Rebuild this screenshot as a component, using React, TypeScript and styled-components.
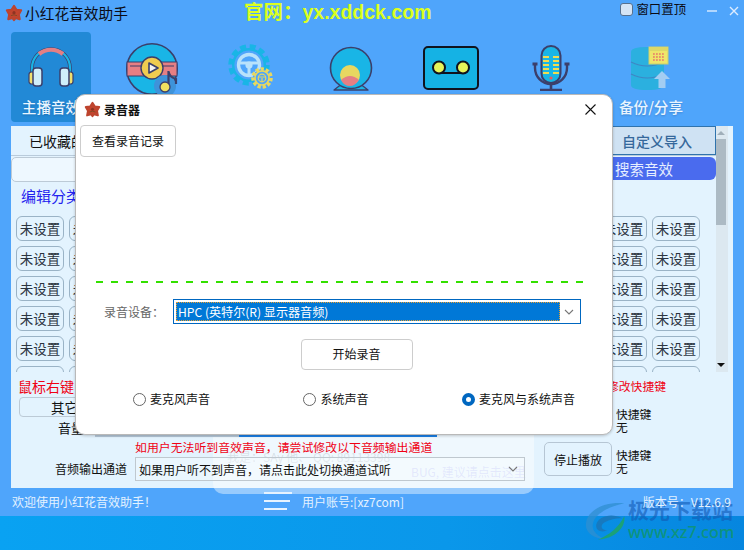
import React from "react";
import styled, { createGlobalStyle } from "styled-components";

const INK = "#3b3f6b";
const CYAN = "#19b5e6";
const SALMON = "#e57f84";
const YELLOW = "#e8d860";

const GlobalStyle = createGlobalStyle`
  html, body {
    margin: 0;
    padding: 0;
    overflow: hidden;
  }
  * {
    box-sizing: border-box;
  }
  body {
    font-family: "Noto Sans CJK SC", "Noto Sans", sans-serif;
  }
`;

const Flower = ({ size }: { size: number }) => (
  <svg width={size} height={size} viewBox="0 0 20 20">
    <path
      d="M10 2 L12.8 6.4 L18 7 L15.4 11.6 L16.4 17 L11.8 15.6 L10 18 L8.2 15.6 L3.6 17 L4.6 11.6 L2 7 L7.2 6.4 Z"
      fill="#c3452e"
      stroke="#bd442e"
      strokeWidth="2.2"
      strokeLinejoin="round"
    />
    <circle cx="10" cy="9.6" r="1.8" fill="#8f3322" />
    <path d="M6.5 13 Q10 11 13.5 13" stroke="#7d4a22" strokeWidth="1" fill="none" />
  </svg>
);

const HeadphonesIcon = () => (
  <svg width="48" height="42" viewBox="0 0 48 42">
    <path d="M5 28 V22 A19 19 0 0 1 43 22 V28" fill="none" stroke={INK} strokeWidth="3.6" />
    <path d="M5 28 V22 A19 19 0 0 1 43 22 V28" fill="none" stroke={CYAN} strokeWidth="2.2" />
    <path d="M12 8 A19 19 0 0 1 36 8" fill="none" stroke={SALMON} strokeWidth="4.2" />
    <rect x="2" y="26" width="6" height="12" rx="2.5" fill="#f0e070" stroke={INK} strokeWidth="1.2" />
    <rect x="6" y="22" width="9" height="18" rx="3" fill="#cfeefa" stroke={INK} strokeWidth="1.5" />
    <rect x="40" y="26" width="6" height="12" rx="2.5" fill="#f0e070" stroke={INK} strokeWidth="1.2" />
    <rect x="33" y="22" width="9" height="18" rx="3" fill="#cfeefa" stroke={INK} strokeWidth="1.5" />
  </svg>
);

const DiscIcon = () => (
  <svg width="56" height="54" viewBox="0 0 56 54">
    <circle cx="29" cy="27" r="25.2" fill={CYAN} stroke={INK} strokeWidth="1.6" />
    <rect x="4" y="20" width="50" height="14" fill={SALMON} stroke={INK} strokeWidth="1" />
    <path d="M7 24 H18 M40 24 H51" stroke={INK} strokeWidth="1" />
    <circle cx="29" cy="26" r="11" fill="#f0cc50" stroke={INK} strokeWidth="1.4" />
    <path d="M26 21 L35 26 L26 31 Z" fill="#f4f4f4" stroke={INK} strokeWidth="1.6" strokeLinejoin="round" />
    <circle cx="42" cy="44" r="11" fill="#3e93da" />
    <path d="M45.5 44 V29 Q46 35 53 37 V42" fill="none" stroke={INK} strokeWidth="2.2" />
    <circle cx="42" cy="45" r="5" fill="#f0e060" stroke={INK} strokeWidth="1.3" />
  </svg>
);

const GearIcon = () => (
  <svg width="48" height="48" viewBox="0 0 48 48">
    <circle cx="22" cy="21" r="18.5" fill="none" stroke={CYAN} strokeWidth="4.5" strokeDasharray="6 3.7" />
    <circle cx="22" cy="21" r="15.8" fill="#4fa5fb" stroke={CYAN} strokeWidth="2.4" />
    <circle cx="22" cy="21" r="10.5" fill="none" stroke="#b9e2fb" strokeWidth="3.4" />
    <path d="M12 19 H32 M22 21 V31" stroke="#b9e2fb" strokeWidth="3" />
    <circle cx="22" cy="21" r="3.6" fill="#b9e2fb" />
    <circle cx="35" cy="34" r="9" fill="#4fa5fb" stroke={YELLOW} strokeWidth="3.6" strokeDasharray="3.2 1.9" />
    <circle cx="35" cy="34" r="7" fill="#4fa5fb" stroke={YELLOW} strokeWidth="1.6" />
    <circle cx="35" cy="34" r="3.8" fill="none" stroke={YELLOW} strokeWidth="1.2" />
    <path d="M31 33 H39 M35 34 V38" stroke={YELLOW} strokeWidth="1.2" />
  </svg>
);

const CameraIcon = () => (
  <svg width="44" height="46" viewBox="0 0 44 46">
    <path d="M5 44 L14 37 H30 L39 44 Z" fill={CYAN} stroke={INK} strokeWidth="1.3" strokeLinejoin="round" />
    <circle cx="22" cy="22" r="20.5" fill={CYAN} stroke={INK} strokeWidth="1.6" />
    <clipPath id="lens">
      <circle cx="22" cy="22" r="20" />
    </clipPath>
    <circle cx="21" cy="29" r="10" fill={YELLOW} clipPath="url(#lens)" />
    <path d="M12 34 Q21 26 30 34 Q26 40 21 40 Q15 40 12 34 Z" fill={SALMON} />
  </svg>
);

const CassetteIcon = () => (
  <svg width="56" height="44" viewBox="0 0 56 44">
    <rect x="1" y="1" width="54" height="42" rx="4" fill="#15b2e4" stroke="#10131d" strokeWidth="2" />
    <path d="M16 27 H40" stroke="#10131d" strokeWidth="2" />
    <circle cx="16" cy="21.5" r="6" fill="#e6f45a" stroke="#10131d" strokeWidth="2" />
    <circle cx="40" cy="21.5" r="6" fill="#e6f45a" stroke="#10131d" strokeWidth="2" />
  </svg>
);

const MicIcon = () => (
  <svg width="40" height="46" viewBox="0 0 40 46">
    <rect x="10.5" y="1" width="19" height="37" rx="9.5" fill={CYAN} stroke={INK} strokeWidth="2" />
    <path d="M12 12 H18 M22 12 H28 M12 16 H18 M22 16 H28 M12 20 H18 M22 20 H28 M12 24 H18 M22 24 H28 M12 28 H18 M22 28 H28" stroke="#f0dc50" strokeWidth="2" />
    <circle cx="20" cy="33" r="1.6" fill="#ee5a5a" />
    <path d="M4 19 V23 A16 16 0 0 0 36 23 V19" fill="none" stroke={INK} strokeWidth="2.4" />
    <path d="M1.5 19 H6.5 M33.5 19 H38.5" stroke={INK} strokeWidth="3" />
    <path d="M20 39 V44 M9 45 H31" stroke={INK} strokeWidth="2.6" />
  </svg>
);

const DatabaseIcon = () => (
  <svg width="42" height="46" viewBox="0 0 42 46">
    <path d="M1 6 Q1 1 17 1 Q34 1 34 6 V39 Q34 44 17 44 Q1 44 1 39 Z" fill="#2bb0df" />
    <path d="M1 16 Q17 24 34 16 M1 28 Q17 36 34 28" fill="none" stroke="#3f86c4" strokeWidth="1.2" />
    <rect x="19" y="1" width="19" height="17" fill="#eee66a" stroke="#c9cf70" strokeWidth="1" />
    <rect x="19" y="1" width="19" height="4" fill="#dcd868" />
    <path d="M23 8 H35 M23 11 H35 M23 14 H35" stroke="#e87a6a" strokeWidth="1.6" strokeDasharray="1.8 1.2" />
    <path d="M32 25 L40 33 H35.5 V42 H28.5 V33 H24 Z" fill="#a3cdf2" />
  </svg>
);

const Chevron = ({ color }: { color: string }) => (
  <svg width="10" height="6" viewBox="0 0 10 6">
    <path d="M1 1 L5 5 L9 1" fill="none" stroke={color} strokeWidth="1.1" />
  </svg>
);

const LogoSwirl = () => (
  <svg width="43" height="42" viewBox="0 0 46 42">
    <path d="M42 2 C20 0 2 10 1 24 C0 34 10 40 20 40 C12 36 6 30 9 22 C12 12 28 5 42 2 Z" fill="#2f8fd0" opacity="0.75" />
    <path d="M40 18 C28 12 14 16 12 25 C11 31 18 34 24 31 C19 31 16 28 19 24 C23 20 32 18 40 18 Z" fill="#1a76b8" opacity="0.85" />
    <path d="M42 16 C44 28 32 40 14 41 C26 36 36 28 42 16 Z" fill="#1fa565" opacity="0.85" />
  </svg>
);

const Page = styled.div`
  position: relative;
  width: 744px;
  height: 550px;
  display: flex;
  flex-direction: column;
  background: #4fa5fb;
  overflow: hidden;
`;

const TitleBar = styled.header`
  height: 32px;
  display: flex;
  align-items: flex-start;
  padding: 4px 0 0 5px;
`;

const TitleText = styled.span`
  margin-left: 2px;
  width: 219px;
  font-size: 14.7px;
  line-height: 17px;
  color: #0b0b14;
`;

const SiteLink = styled.span`
  margin-top: -2px;
  font-family: "Liberation Sans", "Noto Sans CJK SC", sans-serif;
  font-size: 19.5px;
  font-weight: 700;
  line-height: 21px;
  color: #dcff1e;
`;

const PinToggle = styled.label`
  display: flex;
  align-items: center;
  margin: -3px 0 0 189px;
  font-size: 12.4px;
  line-height: 16px;
  color: #0b0b14;
`;

const PinBox = styled.span`
  width: 13px;
  height: 13px;
  margin-right: 3px;
  border: 1px solid #55708f;
  border-radius: 3px;
  background: #d4e4f5;
`;

const WindowButtons = styled.div`
  display: flex;
  align-items: center;
  gap: 12px;
  margin-left: 21px;
  padding-top: 2px;
`;

const NavBar = styled.nav`
  height: 90px;
  display: flex;
  gap: 20px;
  padding-left: 11px;
`;

const NavItem = styled.div<{ $active?: boolean }>`
  position: relative;
  width: 80px;
  height: 90px;
  display: flex;
  flex-direction: column;
  align-items: center;
  padding-top: 14px;
  border-radius: 4px;
  background: ${(p) => (p.$active ? "#2289d6" : "transparent")};
`;

const IconSlot = styled.div<{ $lift?: number }>`
  height: 48px;
  display: flex;
  align-items: flex-start;
  justify-content: center;
  margin-top: ${(p) => (p.$lift ? -p.$lift : 0)}px;
`;

const NavLabel = styled.span`
  margin-top: 4px;
  font-size: 14.6px;
  line-height: 18px;
  font-weight: 500;
  color: #e9f5ff;
  text-shadow: 0 1px 2px rgba(0, 40, 90, 0.25);
`;

const Panel = styled.main`
  width: 722px;
  height: 362px;
  margin: 4px 0 0 11px;
  display: flex;
  flex-direction: column;
  background: #e3f3fe;
`;

const Upper = styled.div`
  height: 246px;
  display: flex;
`;

const UpperMain = styled.div`
  flex: 1;
  min-width: 0;
  display: flex;
  flex-direction: column;
`;

const TabRow = styled.div`
  height: 30px;
  display: flex;
  justify-content: space-between;
  border-bottom: 1px solid #b9cbdb;
`;

const Tab = styled.div<{ $active?: boolean }>`
  width: ${(p) => (p.$active ? "130px" : "120px")};
  display: flex;
  align-items: center;
  justify-content: center;
  padding-left: ${(p) => (p.$active ? "12px" : "0")};
  font-size: 14px;
  font-weight: ${(p) => (p.$active ? 500 : 400)};
  color: ${(p) => (p.$active ? "#35689b" : "#111")};
  background: ${(p) => (p.$active ? "#cfe2f3" : "transparent")};
  border: ${(p) => (p.$active ? "1px solid #2f73ad" : "none")};
`;

const SearchRow = styled.div`
  height: 23px;
  margin-top: 1px;
  display: flex;
  justify-content: space-between;
`;

const SearchInput = styled.div`
  width: 300px;
  height: 25px;
  border: 1px solid #bccad6;
  border-radius: 5px;
  background: #eef8ff;
`;

const SearchButton = styled.div`
  width: 125px;
  display: flex;
  align-items: center;
  padding-left: 24px;
  border-radius: 0 6px 6px 0;
  background: #4a6bee;
  font-size: 14.5px;
  color: #e6efff;
`;

const EditLabel = styled.div`
  height: 36px;
  padding: 6px 0 0 10px;
  font-size: 15px;
  line-height: 20px;
  color: #2222ee;
`;

const KeyGrid = styled.div`
  height: 156px;
  overflow: hidden;
  display: grid;
  grid-template-columns: repeat(13, 48px);
  grid-auto-rows: 25px;
  gap: 5px;
  padding-left: 5px;
`;

const KeyButton = styled.div`
  display: flex;
  align-items: center;
  justify-content: center;
  padding-bottom: 1px;
  border: 1px solid #9ab3c6;
  border-radius: 6px;
  font-size: 13.5px;
  color: #2b3440;
`;

const ScrollTrack = styled.div`
  position: relative;
  width: 12px;
  margin-right: 5px;
  background: #dce8f0;
`;

const ScrollThumb = styled.div`
  position: absolute;
  top: 13px;
  left: 0;
  width: 10px;
  height: 86px;
  background: #acbac4;
`;

const ArrowUp = styled.div`
  position: absolute;
  top: 5px;
  left: 1px;
  border-left: 4px solid transparent;
  border-right: 4px solid transparent;
  border-bottom: 4px solid #a0afba;
`;

const ArrowDown = styled.div`
  position: absolute;
  bottom: 5px;
  left: 1px;
  border-left: 4px solid transparent;
  border-right: 4px solid transparent;
  border-top: 4px solid #111;
`;

const HintRow = styled.div`
  height: 25px;
  display: flex;
  justify-content: space-between;
  align-items: center;
  padding: 2px 67px 0 7px;
  color: #f00014;
`;

const HintLeft = styled.span`
  font-size: 14px;
`;

const HintRight = styled.span`
  font-size: 11.8px;
`;

const Lower = styled.div`
  flex: 1;
  display: flex;
  padding-left: 8px;
`;

const LowerMain = styled.div`
  width: 506px;
  display: flex;
  flex-direction: column;
`;

const OtherButton = styled.div`
  width: 118px;
  height: 20px;
  display: flex;
  align-items: center;
  justify-content: center;
  border: 1px solid #bccad6;
  border-radius: 4px;
  font-size: 13.5px;
  color: #111;
`;

const VolumeRow = styled.div`
  height: 17px;
  margin-top: 3px;
  display: flex;
  align-items: flex-end;
`;

const VolumeLabel = styled.span`
  width: 76px;
  padding-left: 39px;
  font-size: 13px;
  line-height: 16px;
  align-self: flex-start;
  color: #111;
`;

const VolumeTrack = styled.div`
  position: relative;
  z-index: 2;
  width: 342px;
  height: 3px;
  background: #b5c8d9;
  overflow: hidden;
`;

const VolumeFill = styled.div`
  height: 100%;
  margin-left: 144px;
  background: #1a7fe6;
`;

const OutputHint = styled.div`
  position: relative;
  z-index: 2;
  margin: 2px 0 0 116px;
  font-size: 11.9px;
  line-height: 15px;
  color: #f00014;
`;

const OutputRow = styled.div`
  margin-top: 3px;
  display: flex;
  align-items: center;
`;

const OutputLabel = styled.span`
  width: 116px;
  padding-left: 36px;
  font-size: 12px;
  line-height: 16px;
  white-space: nowrap;
  color: #111;
`;

const OutputSelect = styled.div`
  position: relative;
  z-index: 2;
  width: 390px;
  height: 24px;
  display: flex;
  align-items: center;
  justify-content: space-between;
  padding: 0 6px 0 3px;
  border: 1px solid #bfc8cf;
  background: rgba(255, 255, 255, 0.25);
  font-size: 12px;
  color: #111;
`;

const StopButton = styled.div`
  width: 68px;
  height: 34px;
  margin: 45px 0 0 19px;
  display: flex;
  align-items: center;
  justify-content: center;
  border: 1px solid #b6c6d4;
  border-radius: 5px;
  font-size: 12px;
  color: #111;
`;

const ShortcutColumn = styled.div`
  margin-left: 4px;
  padding-top: 10px;
  display: flex;
  flex-direction: column;
  gap: 15px;
`;

const ShortcutText = styled.div`
  font-size: 11.8px;
  line-height: 13px;
  color: #111;
`;

const Watermark = styled.div`
  position: absolute;
  z-index: 1;
  left: 213px;
  top: 420px;
  width: 321px;
  height: 74px;
  padding: 30px 0 0 14px;
  border-radius: 0 0 10px 10px;
  background: rgba(255, 255, 255, 0.42);
  font-size: 12px;
  line-height: 14px;
  color: rgba(120, 120, 140, 0.2);
`;

const WatermarkTail = styled.div`
  margin: 1px 0 0 184px;
  color: rgba(130, 120, 240, 0.2);
  font-size: 12px;
  white-space: nowrap;
`;

const StatusBar = styled.footer`
  position: relative;
  z-index: 2;
  height: 28px;
  display: flex;
  align-items: center;
  padding: 0 13px 2px 12px;
  font-size: 12px;
  color: #e4f2ff;
`;

const StatusLeft = styled.span`
  width: 252px;
`;

const MenuLines = styled.div`
  width: 38px;
  display: flex;
  flex-direction: column;
  gap: 6px;
`;

const MenuLine = styled.span<{ $w: number }>`
  display: block;
  width: ${(p) => p.$w}px;
  height: 2px;
  background: #e6f3ff;
`;

const StatusUser = styled.span`
  flex: 1;
`;

const BottomBand = styled.div`
  flex: 1;
  background: linear-gradient(90deg, #09a2f2 0%, #0a97ea 60%, #0686df 100%);
`;

const SiteMark = styled.div`
  position: absolute;
  z-index: 1;
  left: 585px;
  top: 499px;
  display: flex;
  align-items: center;
`;

const SiteMarkText = styled.div`
  margin-top: -3px;
  display: flex;
  flex-direction: column;
`;

const SiteMarkName = styled.span`
  font-size: 21px;
  line-height: 26px;
  font-weight: 700;
  color: rgba(18, 90, 180, 0.62);
`;

const SiteMarkUrl = styled.span`
  font-family: "Noto Sans", sans-serif;
  font-size: 16.2px;
  line-height: 21px;
  font-weight: 500;
  color: rgba(15, 150, 100, 0.8);
`;

const Dialog = styled.section`
  position: absolute;
  z-index: 3;
  left: 75px;
  top: 94px;
  width: 538px;
  height: 341px;
  display: flex;
  flex-direction: column;
  border: 1px solid #b9b9b9;
  border-radius: 10px;
  background: #fff;
  box-shadow: 0 1px 3px rgba(0, 0, 0, 0.2);
`;

const DialogHeader = styled.div`
  height: 30px;
  display: flex;
  align-items: center;
  justify-content: space-between;
  padding: 0 16px 2px 8px;
`;

const DialogTitle = styled.div`
  display: flex;
  align-items: center;
  gap: 3px;
  font-size: 12px;
  font-weight: 700;
  color: #111;
`;

const PlainButton = styled.div<{ $w: number; $h: number }>`
  width: ${(p) => p.$w}px;
  height: ${(p) => p.$h}px;
  display: flex;
  align-items: center;
  justify-content: center;
  padding-bottom: 2px;
  border: 1px solid #cdcdcd;
  border-radius: 4px;
  font-size: 12px;
  color: #111;
  background: #fff;
`;

const HistoryRow = styled.div`
  padding-left: 4px;
`;

const DashLine = styled.div`
  height: 2px;
  margin: 124px 26px 0 20px;
  background: repeating-linear-gradient(90deg, #33e000 0 7px, transparent 7px 15px);
`;

const DeviceRow = styled.div`
  margin-top: 16px;
  display: flex;
  align-items: center;
  padding-left: 28px;
`;

const DeviceLabel = styled.span`
  width: 69px;
  font-size: 12px;
  color: #666;
`;

const DeviceSelect = styled.div`
  width: 408px;
  height: 25px;
  display: flex;
  align-items: center;
  padding: 2px;
  border: 1px solid #0067c0;
`;

const DeviceValue = styled.div`
  flex: 1;
  height: 19px;
  display: flex;
  align-items: center;
  padding: 0 0 1px 2px;
  background: #0078d7;
  outline: 1px dotted #e8a030;
  outline-offset: -1px;
  font-size: 12.1px;
  color: #fff;
`;

const DeviceChevron = styled.div`
  width: 18px;
  display: flex;
  justify-content: center;
`;

const StartRow = styled.div`
  margin-top: 15px;
  display: flex;
  justify-content: center;
  padding-left: 25px;
`;

const RadioRow = styled.div`
  margin-top: 21px;
  display: flex;
  justify-content: space-between;
  padding: 0 37px 0 57px;
`;

const RadioItem = styled.label`
  display: flex;
  align-items: center;
  gap: 4px;
  font-size: 12px;
  line-height: 16px;
  color: #111;
`;

const RadioDot = styled.span<{ $on?: boolean }>`
  width: 13px;
  height: 13px;
  border-radius: 50%;
  background: #fff;
  border: ${(p) => (p.$on ? "4px solid #0067c0" : "1px solid #666")};
`;

const ROWS = 6;
const COLS = 13;

export default function App() {
  return (
    <Page>
      <GlobalStyle />
      <TitleBar>
        <Flower size={18} />
        <TitleText>小红花音效助手</TitleText>
        <SiteLink>官网：yx.xddck.com</SiteLink>
        <PinToggle>
          <PinBox />
          窗口置顶
        </PinToggle>
        <WindowButtons>
          <svg width="10" height="10" viewBox="0 0 10 10">
            <path d="M0 5 H10" stroke="#dcecff" strokeWidth="1.4" />
          </svg>
          <svg width="10" height="10" viewBox="0 0 10 10">
            <path d="M1 1 L9 9 M9 1 L1 9" stroke="#dcecff" strokeWidth="1.4" />
          </svg>
        </WindowButtons>
      </TitleBar>

      <NavBar>
        <NavItem $active>
          <IconSlot>
            <HeadphonesIcon />
          </IconSlot>
          <NavLabel>主播音效</NavLabel>
        </NavItem>
        <NavItem>
          <IconSlot $lift={4}>
            <DiscIcon />
          </IconSlot>
        </NavItem>
        <NavItem>
          <IconSlot $lift={2}>
            <GearIcon />
          </IconSlot>
        </NavItem>
        <NavItem>
          <IconSlot>
            <CameraIcon />
          </IconSlot>
        </NavItem>
        <NavItem>
          <IconSlot>
            <CassetteIcon />
          </IconSlot>
        </NavItem>
        <NavItem>
          <IconSlot $lift={1}>
            <MicIcon />
          </IconSlot>
        </NavItem>
        <NavItem>
          <IconSlot>
            <DatabaseIcon />
          </IconSlot>
          <NavLabel>备份/分享</NavLabel>
        </NavItem>
      </NavBar>

      <Panel>
        <Upper>
          <UpperMain>
            <TabRow>
              <Tab>已收藏的音效</Tab>
              <Tab $active>自定义导入</Tab>
            </TabRow>
            <SearchRow>
              <SearchInput />
              <SearchButton>搜索音效</SearchButton>
            </SearchRow>
            <EditLabel>编辑分类</EditLabel>
            <KeyGrid>
              {Array.from({ length: ROWS * COLS }, (_, i) => (
                <KeyButton key={i}>未设置</KeyButton>
              ))}
            </KeyGrid>
          </UpperMain>
          <ScrollTrack>
            <ArrowUp />
            <ScrollThumb />
            <ArrowDown />
          </ScrollTrack>
        </Upper>

        <HintRow>
          <HintLeft>鼠标右键</HintLeft>
          <HintRight>修改快捷键</HintRight>
        </HintRow>

        <Lower>
          <LowerMain>
            <OtherButton>其它设置</OtherButton>
            <VolumeRow>
              <VolumeLabel>音量</VolumeLabel>
              <VolumeTrack>
                <VolumeFill />
              </VolumeTrack>
            </VolumeRow>
            <OutputHint>如用户无法听到音效声音，请尝试修改以下音频输出通道</OutputHint>
            <OutputRow>
              <OutputLabel>音频输出通道</OutputLabel>
              <OutputSelect>
                如果用户听不到声音，请点击此处切换通道试听
                <Chevron color="#777" />
              </OutputSelect>
            </OutputRow>
          </LowerMain>
          <StopButton>停止播放</StopButton>
          <ShortcutColumn>
            <ShortcutText>
              快捷键
              <br />无
            </ShortcutText>
            <ShortcutText>
              快捷键
              <br />无
            </ShortcutText>
          </ShortcutColumn>
        </Lower>
      </Panel>

      <StatusBar>
        <StatusLeft>欢迎使用小红花音效助手！</StatusLeft>
        <MenuLines>
          <MenuLine $w={28} />
          <MenuLine $w={26} />
          <MenuLine $w={23} />
        </MenuLines>
        <StatusUser>用户账号:[xz7com]</StatusUser>
        <span>版本号：V12.6.9</span>
      </StatusBar>
      <BottomBand />

      <Watermark>
        我是：SAy 他、 QQ: 89113398
        <WatermarkTail>BUG, 建议请点击这里</WatermarkTail>
      </Watermark>

      <SiteMark>
        <LogoSwirl />
        <SiteMarkText>
          <SiteMarkName>极光下载站</SiteMarkName>
          <SiteMarkUrl>www.xz7.com</SiteMarkUrl>
        </SiteMarkText>
      </SiteMark>

      <Dialog>
        <DialogHeader>
          <DialogTitle>
            <Flower size={17} />
            录音器
          </DialogTitle>
          <svg width="11" height="11" viewBox="0 0 11 11">
            <path d="M0.5 0.5 L10.5 10.5 M10.5 0.5 L0.5 10.5" stroke="#111" strokeWidth="1.1" />
          </svg>
        </DialogHeader>
        <HistoryRow>
          <PlainButton $w={96} $h={32}>
            查看录音记录
          </PlainButton>
        </HistoryRow>
        <DashLine />
        <DeviceRow>
          <DeviceLabel>录音设备：</DeviceLabel>
          <DeviceSelect>
            <DeviceValue>HPC (英特尔(R) 显示器音频)</DeviceValue>
            <DeviceChevron>
              <Chevron color="#777" />
            </DeviceChevron>
          </DeviceSelect>
        </DeviceRow>
        <StartRow>
          <PlainButton $w={112} $h={31}>
            开始录音
          </PlainButton>
        </StartRow>
        <RadioRow>
          <RadioItem>
            <RadioDot />
            麦克风声音
          </RadioItem>
          <RadioItem>
            <RadioDot />
            系统声音
          </RadioItem>
          <RadioItem>
            <RadioDot $on />
            麦克风与系统声音
          </RadioItem>
        </RadioRow>
      </Dialog>
    </Page>
  );
}
